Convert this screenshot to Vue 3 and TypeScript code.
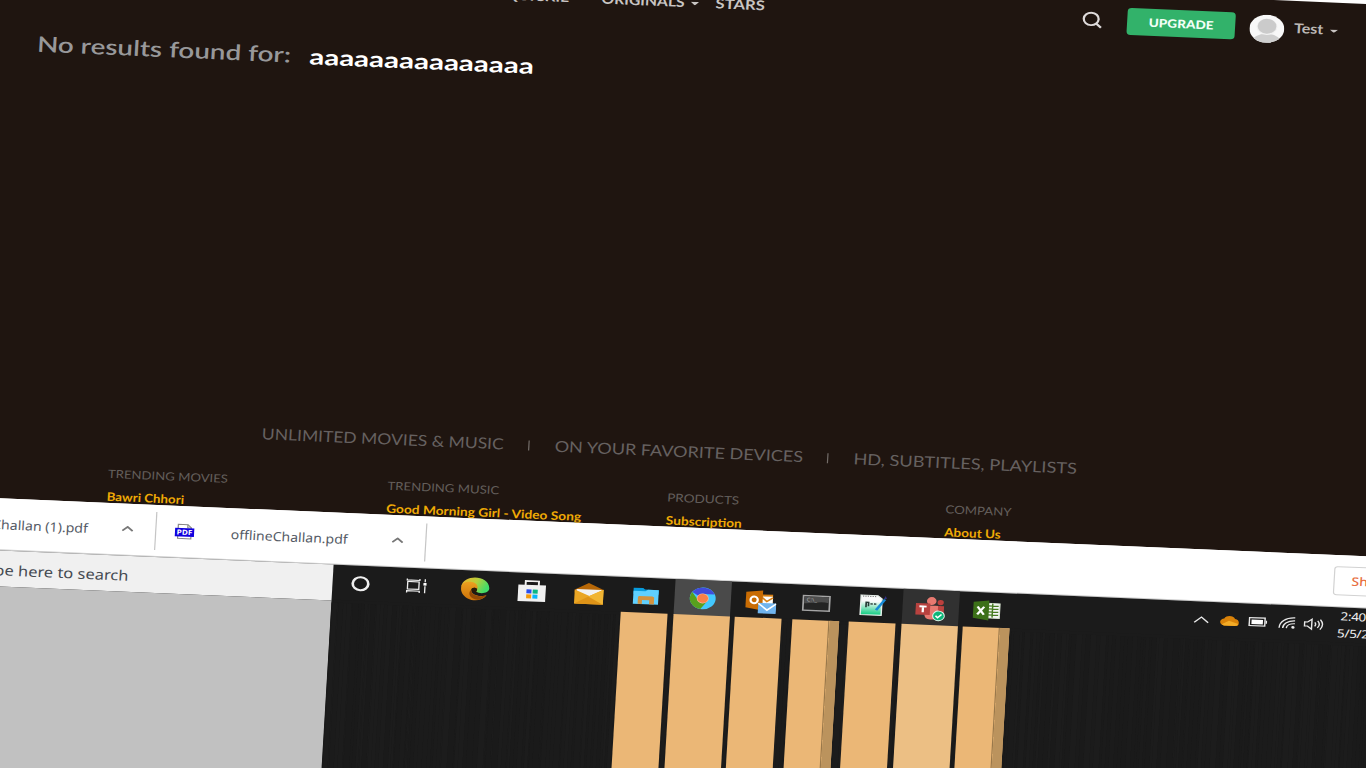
<script setup lang="ts">
import { h, type FunctionalComponent } from 'vue'

interface LabelProps { text: string; w: number; gap?: number }

// One line of text fitted to a given width; the baseline is 14px below its top.
const Label: FunctionalComponent<LabelProps> = (p) =>
  h('svg', { width: p.w, height: 18, style: { marginLeft: `${p.gap ?? 0}px`, overflow: 'visible', flex: 'none' } }, [
    h('text', { x: 0, y: 14, textLength: p.w, lengthAdjust: 'spacingAndGlyphs' }, p.text),
  ])
Label.props = ['text', 'w', 'gap']

const columns = [
  { title: 'TRENDING MOVIES', tw: 100, link: 'Bawri Chhori', lw: 64.5 },
  { title: 'TRENDING MUSIC', tw: 93, link: 'Good Morning Girl - Video Song', lw: 162.4 },
  { title: 'PRODUCTS', tw: 60, link: 'Subscription', lw: 63.3 },
  { title: 'COMPANY', tw: 55, link: 'About Us', lw: 47 },
]

interface App { id: string; bar?: 'normal' | 'wide' | 'pale' | 'stacked' }
const apps: App[] = [
  { id: 'cortana' }, { id: 'tasks' }, { id: 'edge' }, { id: 'store' }, { id: 'mail' },
  { id: 'files', bar: 'normal' }, { id: 'chrome', bar: 'wide' }, { id: 'outlook', bar: 'normal' },
  { id: 'cmd', bar: 'stacked' }, { id: 'notes', bar: 'normal' }, { id: 'teams', bar: 'pale' },
  { id: 'excel', bar: 'stacked' },
]

// Irregular faint vertical streaks below the taskbar.
let seed = 17
const rnd = () => (seed = (seed * 16807) % 2147483647) / 2147483647
const streaks: { w: number; c: string }[] = []
for (let x = 0; x < 900;) {
  const w = 1 + rnd() * 4
  const g = 26 + Math.floor(rnd() * 3)
  streaks.push({ w, c: `rgb(${g},${g},${g})` })
  x += w
}
</script>

<template>
  <div class="view">
    <div class="stage">
      <section class="page">
        <nav class="nav">
          <Label class="item" text="QUICKIE" :w="53" :gap="420" />
          <i class="caret c1" />
          <Label class="item" text="ORIGINALS" :w="69.3" :gap="14" />
          <i class="caret c2" />
          <Label class="item" text="STARS" :w="41" :gap="14" />
          <svg class="search" width="18" height="18" viewBox="0 0 18 18"><circle cx="8" cy="7.6" r="6.2" /><path d="M12.3 12 16.5 16" /></svg>
          <div class="upgrade"><Label text="UPGRADE" :w="54" /></div>
          <svg class="avatar" width="29" height="28" viewBox="0 0 29 28">
            <defs><clipPath id="face"><ellipse cx="14.5" cy="14" rx="14.5" ry="14" /></clipPath></defs>
            <g clip-path="url(#face)"><rect width="29" height="28" fill="#f8f8f8" /><ellipse cx="15" cy="28" rx="12.5" ry="9" fill="#cfcfcf" /><ellipse cx="14.5" cy="12" rx="8.7" ry="8.2" fill="#f1f1f1" /><ellipse cx="14.5" cy="11.5" rx="7.8" ry="7.4" fill="#cbcbcb" /></g>
          </svg>
          <Label class="user" text="Test" :w="24.5" :gap="7.500" />
          <i class="caret c3" />
        </nav>
        <div class="result">
          <Label class="none" text="No results found for:" :w="211.5" :gap="32.600" />
          <Label class="query" text="aaaaaaaaaaaaaaa" :w="187" :gap="15.500" />
        </div>
        <footer>
          <div class="tagline">
            <Label text="UNLIMITED MOVIES &amp; MUSIC" :w="201.5" :gap="239.3" /><i />
            <Label text="ON YOUR FAVORITE DEVICES" :w="207" /><i />
            <Label text="HD, SUBTITLES, PLAYLISTS" :w="186.2" />
          </div>
          <div class="cols">
            <div v-for="c in columns" :key="c.title" class="col">
              <Label class="head" :text="c.title" :w="c.tw" />
              <Label class="link" :text="c.link" :w="c.lw" />
            </div>
          </div>
        </footer>
      </section>

      <section class="downloads">
        <Label class="file" text="offlineChallan (1).pdf" :w="115" :gap="-16.500" />
        <svg class="chev" width="10" height="6" viewBox="0 0 10 6"><path d="M.7 5.2 5 1.2 9.3 5.2" /></svg>
        <i class="sep" />
        <svg class="pdf" width="17" height="17" viewBox="0 0 17 17">
          <path d="M3 6V1.5h8l3 3V6M3 13v2.5h11V13" fill="#fff" stroke="#888" /><path d="M11 1.5v3h3" fill="none" stroke="#888" />
          <rect x=".5" y="5" width="16" height="8.5" fill="#1000df" /><text x="2" y="11.7" textLength="13" lengthAdjust="spacingAndGlyphs">PDF</text>
        </svg>
        <Label class="file" text="offlineChallan.pdf" :w="97.5" :gap="30.500" />
        <svg class="chev second" width="10" height="6" viewBox="0 0 10 6"><path d="M.7 5.2 5 1.2 9.3 5.2" /></svg>
        <i class="sep s2" />
        <div class="showall"><Label text="Show all" :w="46" /></div>
      </section>

      <section class="taskbar">
        <div class="find"><Label text="Type here to search" :w="126" :gap="9" /></div>
        <div v-for="a in apps" :key="a.id" class="cell" :class="a.id">
          <svg width="28" height="28" viewBox="0 0 28 28">
            <circle v-if="a.id === 'cortana'" cx="14.300" cy="14" r="6.500" fill="none" stroke="#efefef" stroke-width="2.200" />
            <g v-else-if="a.id === 'tasks'" fill="none" stroke="#eee" stroke-width="1.1" transform="translate(-1 -.3)">
              <rect x="6.5" y="10" width="9.5" height="7.5" /><path d="M6 7v1.5h10.5V7M6 21v-1.8h10.5V21M21 7v3M21 14v7" /><rect x="19.6" y="10.8" width="2.6" height="2.6" fill="#fff" stroke="none" />
            </g>
            <g v-else-if="a.id === 'edge'" transform="translate(.6 .6)">
              <defs>
                <linearGradient id="eg" x1="0" y1="0" x2="1" y2=".35"><stop offset="0" stop-color="#f3b12c" /><stop offset=".55" stop-color="#b8cf3b" /><stop offset="1" stop-color="#43dc68" /></linearGradient>
                <linearGradient id="eo" x1="0" y1="0" x2="0" y2="1"><stop offset="0" stop-color="#eca020" /><stop offset="1" stop-color="#cc7209" /></linearGradient>
              </defs>
              <path d="M2.500 12C4 -1 25-1 26 12.500c0 5-7 6.500-11 4 1.500-2 1.500-5-2-7z" fill="url(#eg)" />
              <path d="M2.500 13C3 8 7 6.500 11 7c4 .5 6 3.500 5 7-2-2.500-5-1.500-5 1 0 4 5 6 9 5.500 2 0 3.500-.7 4-1C21 25 14 26.500 8.500 23.500 4.500 21.500 2.300 17.500 2.500 13z" fill="url(#eo)" />
              <path d="M11 14.500c-.5 5 7 8.500 13 4.500-1 2.500-4 5-7.500 5.500-5-.5-9-5-5.500-10z" fill="#934a06" />
              <path d="M11.500 13.500c2-2 5.500-.5 4 2-.8.800.5 2 1.500 2.500-3 0-6-1.500-5.500-4.500z" fill="#2a1a08" />
            </g>
            <g v-else-if="a.id === 'store'" transform="translate(-.4 .5)">
              <path d="M9 9V3.600h11V9" fill="none" stroke="#efefef" stroke-width="1.6" /><path d="M3 7.5h23v16.5H3z" fill="#f1f1f1" />
              <path fill="#294ff0" d="M10 12h4.2v4H10z" /><path fill="#0bb783" d="M15.2 12h4.2v4h-4.2z" /><path fill="#f59b0b" d="M10 17h4.2v4H10z" /><path fill="#0ab6fc" d="M15.2 17h4.2v4h-4.2z" />
            </g>
            <g v-else-if="a.id === 'mail'" transform="translate(.2 .6)">
              <path d="M2.5 10 14 3l12 6v4H2.5z" fill="#b76706" /><path d="M4 9.5h21v8H4z" fill="#f2f2f2" /><path d="M2.5 10 15 16 26.500 9v15h-24z" fill="#eaa624" /><path d="M2.500 24 15 16l11.500 8z" fill="#df9418" /><path d="M14 16.500 26.500 9v15z" fill="#f1b533" />
            </g>
            <g v-else-if="a.id === 'files'" transform="translate(.6 .3)">
              <path d="M3 6h8l1.500 1.500H24V12H3z" fill="#079bdd" /><path d="M3 9h10l2-1.500h9V22H3z" fill="#5fd0ff" /><path d="M7 22v-7l1-1h11l1.500 1v7H16.500v-4h-6v4z" fill="#d3933f" />
            </g>
            <g v-else-if="a.id === 'chrome'" transform="translate(.5 .6)">
              <circle cx="14" cy="13.500" r="10.800" fill="#43c8ff" /><path d="M14 13.500 5 7.500A10.800 10.800 0 0 1 23.700 9L14 9z" fill="#414bdb" /><path d="M5 7.500a10.800 10.800 0 0 0 7.500 16.700L18 16 10 15z" fill="#58a01d" />
              <circle cx="14" cy="13.500" r="5" fill="#f3b79f" /><circle cx="14" cy="13.500" r="4.400" fill="#fa8048" />
            </g>
            <g v-else-if="a.id === 'outlook'" transform="translate(.9 .6)">
              <path d="M14 7h10v12H14z" fill="#d88114" /><path d="m14.500 9 9.500 0v8h-9.500z" fill="#fff" /><path d="m15 10 4 4 5-4" fill="none" stroke="#d88114" stroke-width="1.500" /><path d="M1.500 5 15.500 3v20L1.500 20.500z" fill="#c96c03" /><ellipse cx="8.400" cy="12.800" rx="3" ry="3.400" fill="none" stroke="#fff" stroke-width="1.900" />
              <path d="M12 15.500h15v10.500H12z" fill="#70b4ee" /><path d="m12 16 7.500 6.500L27 16" fill="none" stroke="#fff" stroke-width="1.500" />
            </g>
            <g v-else-if="a.id === 'cmd'" transform="translate(0 .5)">
              <rect x="3.200" y="6.500" width="22" height="14.500" fill="#242424" stroke="#a5a5a5" stroke-width="1.400" /><path d="M4 7.200h20.500v6c-7-2-13 1-20.500 1z" fill="#4d4d4d" /><text class="prompt" x="6" y="12">C:\_</text>
            </g>
            <g v-else-if="a.id === 'notes'" transform="translate(-1.400 0)">
              <defs><linearGradient id="np" x1="0" y1="0" x2="0" y2="1"><stop offset=".3" stop-color="#fafafa" /><stop offset="1" stop-color="#0dcc80" /></linearGradient></defs>
              <path d="M4.500 4h14l3.500 3v16.500H4.500z" fill="url(#np)" stroke="#e6eee9" stroke-width="1.200" /><path d="M6 5h12" stroke="#777" stroke-dasharray="1 1" /><path d="M9 16v-5h2v4M12.500 12.500h2M15.500 12.500h2" fill="none" stroke="#263a35" stroke-width="1.400" /><path d="m16.500 18 7-11 2 1-7 11z" fill="#168bd8" /><path d="m23.500 7 1.500-3 1 3z" fill="#343286" />
            </g>
            <g v-else-if="a.id === 'teams'" transform="translate(-.5 .6)">
              <circle cx="15.500" cy="6.500" r="4" fill="#e77970" /><circle cx="23" cy="7.600" r="2.600" fill="#bd403d" /><path d="M18 11h8v8q-4 4-8 0z" fill="#bd4440" /><path d="M10 11h11v9q-1 5-6 5t-5-5z" fill="#e77970" /><path d="M2.500 9h12v11.500h-12z" fill="#b8423f" /><path d="M5.500 12.200h6M8.500 12v6" stroke="#fff" stroke-width="1.900" />
              <circle cx="21.800" cy="21" r="5.300" fill="#dff4eb" /><circle cx="21.800" cy="21" r="4.400" fill="#0db578" /><path d="m19.300 21 1.800 1.800 3.200-3.300" fill="none" stroke="#fff" stroke-width="1.400" />
            </g>
            <g v-else transform="translate(-1.100 0)">
              <path d="M14 7h11v14.500H14z" fill="#f5f5f5" stroke="#dce8d5" /><path d="M15 9.500h9M15 12.500h9M15 15.500h9M15 18.500h9M19 7v14" stroke="#477c21" stroke-width="1.200" /><path d="M3 6 16 4v20L3 22z" fill="#3c7018" /><path d="m6.500 10.500 5.500 8M12 10.500l-5.500 8" stroke="#fff" stroke-width="2" />
            </g>
          </svg>
        </div>
        <div class="tray">
          <svg width="14" height="12" viewBox="0 0 14 12"><path d="m1.200 9 5.800-5.500L12.800 9" /></svg>
          <svg class="cloud" width="17" height="12" viewBox="0 0 17 12"><path d="M2 10C-1 7 2 4 4 4c2-4 8-3 9 0 4 0 4 6 2 7H4z" fill="#d98209" /><path d="m2 10 6-4 8 3q-1 2-3 2H4z" fill="#f3ab26" /></svg>
          <svg class="bat" width="16" height="12" viewBox="0 0 16 12"><rect x="1" y="2" width="13" height="8" /><rect x="2.800" y="3.800" width="9.500" height="4.500" fill="#fff" stroke="none" /><path d="M15.200 4.500v3" /></svg>
          <svg class="wifi" width="15" height="13" viewBox="0 0 15 13"><path d="M1 12C1 6 6 1.500 14 1.500M4 12c0-4 4-7.500 10-7.500M7 12c0-3 3-4.700 7-4.700" /><circle cx="12.500" cy="11" r="1.400" fill="#eee" stroke="none" /></svg>
          <svg class="vol" width="17" height="14" viewBox="0 0 17 14"><path d="M1 5h2.500L7 2v10L3.500 9H1zM9.500 5q1.500 2 0 4M11.800 3.500q3 3.500 0 7M14 2q4 5 0 10" /></svg>
          <div class="clock"><span class="time">2:40 PM</span><span>5/5/2022</span></div>
        </div>
      </section>

      <section class="below">
        <div class="grey" />
        <div v-for="a in apps" :key="a.id" class="cell"><div v-if="a.bar" class="bar" :class="a.bar" /></div>
        <div class="streaks"><i v-for="(s, i) in streaks" :key="i" :style="{ width: `${s.w}px`, background: s.c }" /></div>
      </section>
    </div>
  </div>
</template>

<style>
body { margin: 0; overflow: hidden; }
</style>

<style scoped>
.view { width: 1366px; height: 768px; overflow: hidden; background: #fff; }
.stage { width: 1190px; height: 840px; box-sizing: border-box; padding-top: 6.2px; transform-origin: 0 0; transform: matrix(1.2, 0.051, -0.059, 1, 3.54, -60); font-family: Lato, sans-serif; }
svg { display: block; flex: none; }
.page { height: 550.6px; background: #1f1510; overflow: hidden; }
.nav { height: 54px; display: flex; align-items: center; }
.item { font-size: 13.5px; font-weight: 700; fill: #c9c5c3; }
.caret { width: 7px; height: 3.500px; background: #c9c5c3; clip-path: polygon(0 0, 100% 0, 50% 100%); flex: none; }
.c1 { margin: 1px 0 0 6px; }
.c2 { margin: 2px 0 0 5px; }
.search { margin: 2px 0 0 264px; fill: none; stroke: #dedada; stroke-width: 1.900; }
.upgrade { width: 90px; height: 27px; margin-left: 20px; border-radius: 3.500px; background: #32b26a; display: flex; align-items: center; justify-content: center; font-size: 11.500px; font-weight: 900; fill: #f2fff6; }
.avatar { margin: 3px 0 0 12px; }
.user { font-size: 13.500px; font-weight: 700; fill: #bcb8b6; }
.c3 { margin: 3px 0 0 5.500px; }
.result { display: flex; padding-top: 36px; height: 30px; font-weight: 700; }
.none { font-size: 21.500px; font-weight: 600; fill: #98989a; }
.query { font-size: 21.500px; fill: #fff; margin-top: .5px; }
footer { padding-top: 347.200px; }
.tagline { display: flex; align-items: center; font-size: 15.300px; fill: #666160; height: 18px; }
.tagline i { width: 1px; height: 10px; background: #736d69; margin: 0 20.500px; flex: none; }
.cols { display: flex; padding: 27px 0 0 113px; }
.col { width: 232.800px; flex: none; }
.head { font-size: 11.300px; fill: #635e5b; }
.link { font-size: 11.800px; font-weight: 700; fill: #efaa05; margin-top: 4.400px; }
.downloads { height: 52.200px; background: #fff; display: flex; align-items: center; font-family: "Noto Sans", sans-serif; box-sizing: border-box; border-bottom: 1px solid #ccc; }
.file { font-size: 12.800px; fill: #555b66; margin-top: 2px; }
.chev { margin-left: 28.800px; fill: none; stroke: #777; stroke-width: 1.600; }
.second { margin-left: 36.600px; }
.sep { width: 1px; height: 38px; background: #c5c5c5; margin: 1px 0 0 17.500px; flex: none; }
.pdf { margin-left: 15px; }
.pdf text { font: bold 7px "Noto Sans", sans-serif; fill: #fff; }
.showall { margin-left: 756.500px; width: 76px; height: 29px; box-sizing: border-box; border: 1px solid #d2d2d2; border-radius: 3px; display: flex; align-items: center; justify-content: center; font-size: 11.800px; fill: #e87043; font-weight: 500; flex: none; }
.taskbar { height: 36px; display: flex; background: #1b1b1b; font-family: "Noto Sans", sans-serif; }
.find { width: 304.500px; flex: none; background: #f0f0f0; display: flex; align-items: center; font-size: 14.300px; fill: #454a52; box-sizing: border-box; padding-top: 4px; }
.cell { width: 47.500px; flex: none; display: flex; justify-content: center; align-items: center; }
.taskbar .chrome { background: #4a4a4a; }
.taskbar .teams { background: #313131; }
.prompt { font-size: 5px; fill: #aaa; }
.tray { display: flex; align-items: center; margin-left: 147.500px; }
.tray svg { fill: none; stroke: #e8e8e8; stroke-width: 1.200; }
.tray .cloud { stroke: none; margin-left: 7.500px; }
.tray .bat { margin-left: 7.500px; }
.tray .wifi { margin-left: 8.500px; }
.tray .vol { margin-left: 6px; }
.clock { margin-left: 12px; width: 60px; display: flex; flex-direction: column; font-size: 11.300px; line-height: 17px; color: #f0f0f0; flex: none; letter-spacing: -.3px; white-space: nowrap; position: relative; top: -.5px; }
.time { padding-left: 2px; }
.below { display: flex; height: 190px; margin-top: -1px; background: #1b1b1b; }
.grey { width: 304.500px; flex: none; background: #c1c1c1; margin-top: 1px; }
.below .cell { position: relative; z-index: 1; }
.bar { width: 39px; height: 100%; background: #ebb776; }
.bar.wide { width: 46.500px; }
.bar.pale { width: 46.500px; background: #ecbf84; }
.bar.stacked { box-sizing: border-box; border-right: 8px solid #bb935d; box-shadow: inset -1px 0 #99784b; }
.streaks { display: flex; margin-left: -570px; padding-top: 3px; width: 886px; overflow: hidden; flex: none; }
.streaks i { flex: none; }
</style>
